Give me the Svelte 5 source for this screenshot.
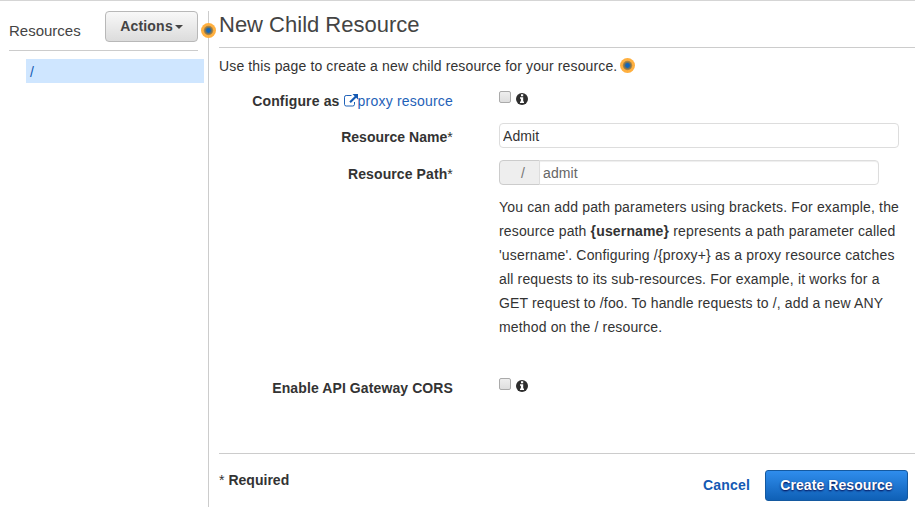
<script>
  const lines = [
    { s: 0.165, parts: [{ t: 'You can add path parameters using brackets. For example, the' }] },
    { s: 0.15, parts: [{ t: 'resource path ' }, { t: '{username}', b: true }, { t: ' represents a path parameter called' }] },
    { s: 0.165, parts: [{ t: "'username'. Configuring /{proxy+} as a proxy resource catches" }] },
    { s: 0.165, parts: [{ t: 'all requests to its sub-resources. For example, it works for a' }] },
    { s: 0.15, parts: [{ t: 'GET request to /foo. To handle requests to /, add a new ANY' }] },
    { s: 0.15, parts: [{ t: 'method on the / resource.' }] }
  ];
  let name = $state('Admit');
  let path = $state('admit');
</script>

{#snippet info()}
  <svg class="info" width="12" height="12" viewBox="0 0 12 12" aria-hidden="true">
    <circle cx="6" cy="6" r="6" fill="#2e2e2e" />
    <path d="M5 1.3h2.2v2H5zM4 4.3h3.2v4.2H8v1.6H4V8.5h.9V5.8H4z" fill="#fff" />
  </svg>
{/snippet}

{#snippet dot()}
  <svg class="dot" width="15" height="15" viewBox="0 0 15 15" aria-hidden="true">
    <circle cx="7.5" cy="7.5" r="7.5" fill="#ffb040" />
    <circle cx="7.5" cy="7.5" r="4.7" fill="#a68348" />
    <circle cx="7.5" cy="7.5" r="3.6" fill="#74725c" />
    <circle cx="7.5" cy="7.5" r="2.4" fill="#1166bb" />
  </svg>
{/snippet}

<div class="page">
  <aside>
    <div class="head">
      <span class="title">Resources</span>
      <button class="actions"><span>Actions</span><i class="caret"></i></button>
    </div>
    <div class="tree">/</div>
  </aside>
  <main>
    <div class="edge">{@render dot()}</div>
    <h1>New Child Resource</h1>
    <p class="intro"><span>Use this page to create a new child resource for your resource.</span>{@render dot()}</p>
    <div class="row proxy">
      <div class="label">
        <b>Configure as&nbsp;</b><svg class="ext" width="14" height="13" viewBox="0 0 14 13" aria-hidden="true">
          <path d="M7.5 1.5H2.2Q.5 1.5.5 3.2v7.1q0 1.7 1.7 1.7h6.6q1.7 0 1.7-1.7V8" fill="none" stroke="#1f62b8" stroke-width="1" />
          <path d="M8.5 0H14v5.5l-1.8-1.8-5.4 5.4-1.5-1.5 5.4-5.4z" fill="#1459b3" />
        </svg><a href="#proxy">proxy resource</a>
      </div>
      <div class="checks"><i class="box"></i>{@render info()}</div>
    </div>
    <div class="row name">
      <div class="label"><b>Resource Name</b>*</div>
      <input class="field" bind:value={name} aria-label="Resource Name" />
    </div>
    <div class="row path">
      <div class="label"><b>Resource Path</b>*</div>
      <div class="group"><span class="prefix">/</span><input bind:value={path} aria-label="Resource Path" /></div>
    </div>
    <div class="help">
      {#each lines as line}
        <div style:letter-spacing="{line.s}px">{#each line.parts as part}{#if part.b}<b>{part.t}</b>{:else}<span>{part.t}</span>{/if}{/each}</div>
      {/each}
    </div>
    <div class="row cors">
      <div class="label"><b>Enable API Gateway CORS</b></div>
      <div class="checks"><i class="box"></i>{@render info()}</div>
    </div>
    <footer>
      <div class="required">* <b>Required</b></div>
      <div class="buttons"><a class="cancel" href="#cancel">Cancel</a><button class="create">Create Resource</button></div>
    </footer>
  </main>
</div>

<style>
  .page {
    box-sizing: border-box;
    display: flex;
    width: 915px;
    height: 507px;
    padding-top: 10px;
    border-top: 1px solid #d5d5d5;
    background: #fff;
    color: #333;
    font: 14px/20px "Liberation Sans", Arial, sans-serif;
    letter-spacing: 0.2px;
    overflow: hidden;
  }
  aside { width: 208px; flex: none; }
  .head {
    box-sizing: border-box;
    display: flex;
    justify-content: space-between;
    height: 40px;
    margin: 0 10px 0 9px;
    border-bottom: 1px solid #ccc;
  }
  .title { padding-top: 10px; font-size: 15px; letter-spacing: 0; color: #444; }
  button { font: bold 14px/20px "Liberation Sans", Arial, sans-serif; padding: 0; }
  .actions {
    display: flex;
    align-items: center;
    justify-content: center;
    gap: 2px;
    width: 93px;
    height: 31px;
    padding-bottom: 1px;
    border: 1px solid #b8b8b8;
    border-radius: 4px;
    background: linear-gradient(#f8f8f8, #dcdcdc);
    color: #444;
    letter-spacing: 0.2px;
  }
  .caret { margin-top: 1px; border: 4px solid transparent; border-top-color: #444; border-bottom: 0; }
  .tree {
    height: 24px;
    margin: 8px 4px 0 26px;
    padding-left: 4px;
    box-sizing: border-box;
    line-height: 26px;
    background: #cfe6ff;
    color: #1459b3;
  }
  main {
    position: relative;
    box-sizing: border-box;
    flex: 1;
    border-left: 1px solid #ccc;
    padding-left: 10px;
  }
  h1 {
    box-sizing: border-box;
    height: 37px;
    margin: 0;
    border-bottom: 1px solid #ccc;
    font-size: 22px;
    font-weight: normal;
    line-height: 27px;
    letter-spacing: 0;
    color: #444;
  }
  .dot { display: block; flex: none; }
  .edge { position: absolute; left: -8px; top: 12px; }
  .intro { display: flex; align-items: center; height: 16px; margin: 10px 0 0; letter-spacing: 0.135px; }
  .intro .dot { margin: -1px 0 0 3px; }
  .row { display: flex; }
  .label { display: flex; justify-content: flex-end; width: 234px; margin-right: 46px; flex: none; }
  .label b { letter-spacing: 0.1px; }
  a { color: #1f62b8; text-decoration: none; }
  .proxy { margin-top: 17px; height: 32px; }
  .proxy .label b { letter-spacing: 0.15px; }
  .name .label b { letter-spacing: 0.03px; }
  .ext { margin: 3px 0 0; }
  .checks { display: flex; gap: 5px; }
  .box {
    box-sizing: border-box;
    width: 12px;
    height: 12px;
    border: 1px solid #aaa;
    border-radius: 2px;
    background: linear-gradient(#eee, #dedede);
  }
  .info { margin-top: 2px; }
  input {
    box-sizing: border-box;
    height: 25px;
    border: 1px solid #ddd;
    border-radius: 4px;
    padding: 1px 3px;
    font: 14px/20px "Liberation Sans", Arial, sans-serif;
    letter-spacing: 0.1px;
    color: #333;
    background: #fff;
  }
  .field { width: 400px; }
  .name .label, .path .label { padding-top: 4px; }
  .name { height: 37px; }
  .path { height: 35px; }
  .group { display: flex; }
  .prefix {
    box-sizing: border-box;
    width: 41px;
    height: 25px;
    padding: 2px 0 0 21px;
    border: 1px solid #ccc;
    border-radius: 4px 0 0 4px;
    background: #eee;
    color: #777;
  }
  .group input { width: 340px; margin-left: -1px; border-radius: 0 4px 4px 0; color: #666; box-shadow: inset 0 1px 1px #eee; }
  .help { margin-left: 280px; height: 183px; line-height: 24px; white-space: pre; }
  .cors { height: 75px; }
  footer {
    display: flex;
    justify-content: space-between;
    border-top: 1px solid #ccc;
    padding: 16px 7px 0 0;
  }
  .required { white-space: pre; letter-spacing: 0.02px; }
  .buttons { display: flex; gap: 15px; }
  .cancel { font-weight: bold; padding-top: 5px; color: #1459b3; }
  .create {
    width: 143px;
    height: 31px;
    padding-bottom: 1px;
    border: 1px solid #1459a0;
    border-radius: 3px;
    background: linear-gradient(#2f8ded, #0f60b6);
    color: #fff;
    text-shadow: 0 1px 2px #004;
    letter-spacing: 0.08px;
  }
</style>
